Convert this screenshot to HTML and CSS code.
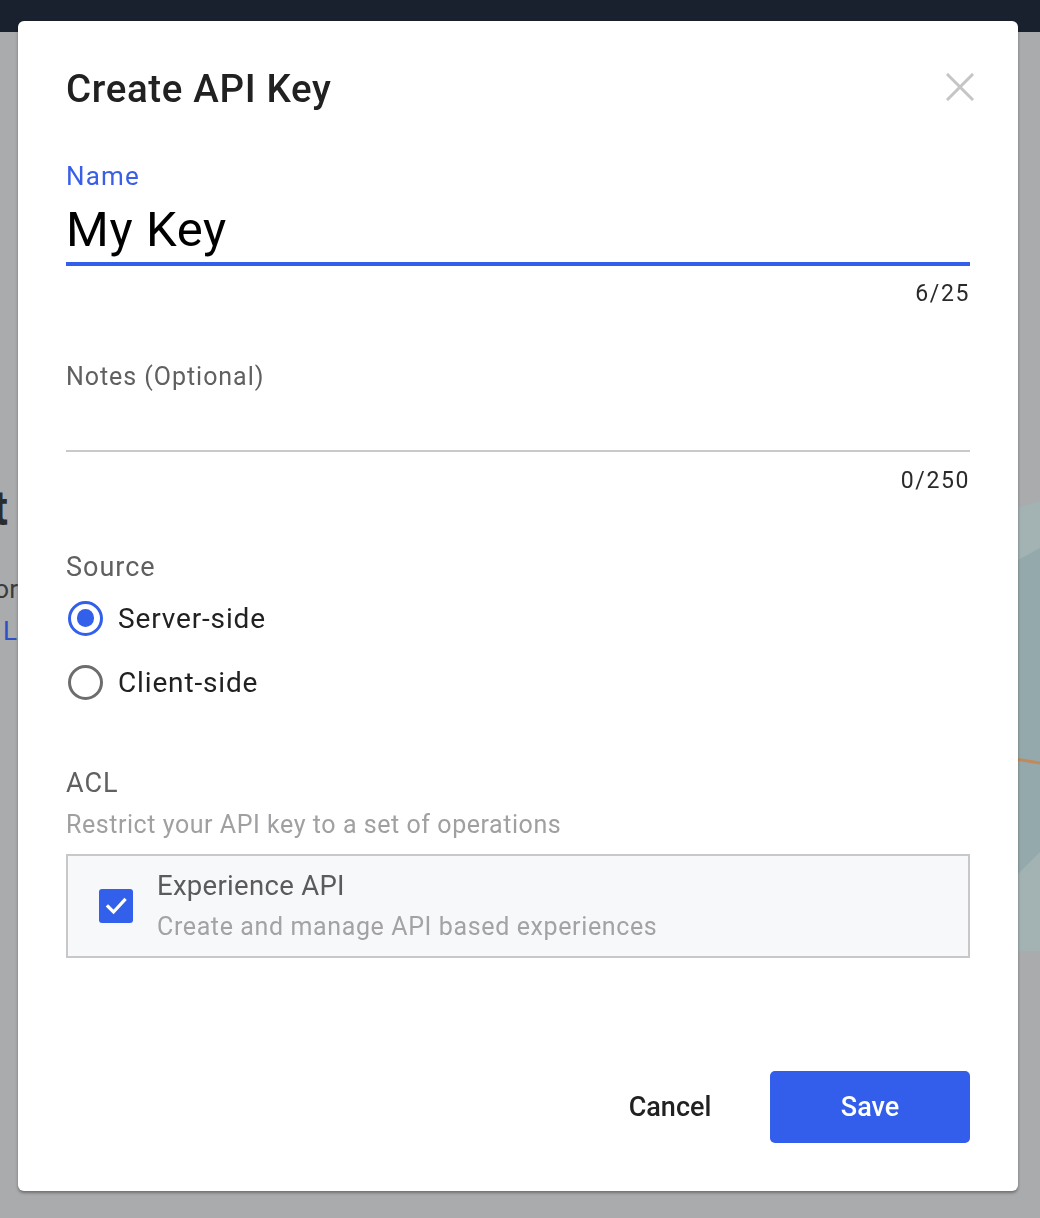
FILE: index.html
```html
<!DOCTYPE html>
<html lang="en">
<head>
<meta charset="utf-8">
<title>Create API Key</title>
<link rel="stylesheet" href="styles.css">
</head>
<body>
  <div class="app">
    <header class="topbar"></header>
    <main class="page">
      <section class="hero">
        <h1 class="hero-title">Your first project</h1>
        <p class="hero-text">Call it from your server or</p>
        <a class="hero-link">Learn more</a>
      </section>
      <div class="illustration">
        <svg width="60" height="470" viewBox="0 0 60 470">
          <path d="M0 22 L60 4 L60 454 L0 456 Z" fill="#a3b2b3"/>
          <path d="M0 84 L60 51 L60 355 L0 415 Z" fill="#94a9ab"/>
          <path d="M0 258 Q30 261 60 266" stroke="#c08a5c" stroke-width="3" fill="none"/>
        </svg>
      </div>
    </main>
  </div>

  <div class="overlay">
    <div class="modal">
      <div class="modal-header">
        <h2 class="modal-title">Create API Key</h2>
        <button class="close" aria-label="Close">
          <svg width="28" height="28" viewBox="0 0 28 28">
            <path d="M2 2 L26 26 M26 2 L2 26" stroke="#c5c5c7" stroke-width="3" stroke-linecap="square"/>
          </svg>
        </button>
      </div>

      <div class="field field-name">
        <div class="label label-active">Name</div>
        <div class="input-value">My Key</div>
      </div>
      <div class="counter counter-name">6/25</div>

      <div class="field field-notes">
        <div class="label">Notes (Optional)</div>
        <div class="input-empty"></div>
      </div>
      <div class="counter counter-notes">0/250</div>

      <div class="section-label source-label">Source</div>
      <div class="radio-group">
        <div class="radio-row">
          <span class="radio radio-on"><span class="radio-dot"></span></span>
          <span class="radio-text">Server-side</span>
        </div>
        <div class="radio-row">
          <span class="radio radio-off"></span>
          <span class="radio-text">Client-side</span>
        </div>
      </div>

      <div class="section-label acl-label">ACL</div>
      <div class="hint">Restrict your API key to a set of operations</div>

      <div class="acl-box">
        <span class="checkbox">
          <svg width="34" height="34" viewBox="0 0 34 34">
            <path d="M9 17.5 L14.5 23 L25.5 11" stroke="#fff" stroke-width="3.2" fill="none" stroke-linecap="square"/>
          </svg>
        </span>
        <div class="acl-text">
          <div class="acl-title">Experience API</div>
          <div class="acl-sub">Create and manage API based experiences</div>
        </div>
      </div>

      <div class="modal-footer">
        <button class="btn btn-cancel">Cancel</button>
        <button class="btn btn-save">Save</button>
      </div>
    </div>
  </div>
</body>
</html>
```
FILE: styles.css
```css
* { box-sizing: border-box; }

body {
  margin: 0;
  width: 1040px;
  height: 1218px;
  overflow: hidden;
  background: #aaabad;
  font-family: Roboto, "Noto Sans", "Liberation Sans", sans-serif;
}

.topbar {
  height: 32px;
  background: #19212f;
}

.page {
  display: flex;
  padding-top: 449px;
}

.hero {
  display: flex;
  flex-direction: column;
  width: 20px;
}

.hero-title {
  width: 400px;
  margin: 0 0 0 -392px;
  text-align: right;
  font-size: 48px;
  line-height: 56px;
  font-weight: 700;
  color: #2b2c2e;
  white-space: nowrap;
}

.hero-text {
  width: 400px;
  margin: 36px 0 0 -382px;
  text-align: right;
  font-size: 26px;
  line-height: 32px;
  color: #3a3b3d;
  white-space: nowrap;
}

.hero-link {
  margin: 10px 0 0 3px;
  font-size: 26px;
  line-height: 32px;
  color: #2f4fc4;
  white-space: nowrap;
}

.illustration {
  margin-left: auto;
  width: 60px;
  margin-top: 16px;
}

.illustration svg { display: block; }

.overlay {
  position: fixed;
  inset: 0;
  padding: 21px 0 0 18px;
}

.modal {
  width: 1000px;
  height: 1170px;
  background: #fff;
  border-radius: 6px;
  padding: 44px 48px 48px;
  display: flex;
  flex-direction: column;
  box-shadow: 0 2px 3px rgba(0, 0, 0, 0.35);
}

.modal-header {
  display: flex;
  justify-content: space-between;
  align-items: center;
  height: 48px;
}

.modal-title {
  margin: 0;
  font-size: 38.5px;
  letter-spacing: 0.65px;
  line-height: 48px;
  font-weight: 500;
  color: #212121;
}

.close {
  border: 0;
  background: none;
  padding: 0;
  width: 28px;
  height: 28px;
  margin: 0 -4px 4px 0;
}

.close svg { display: block; }

.field-name { margin-top: 48px; }

.label {
  font-size: 25px;
  letter-spacing: 0.95px;
  line-height: 30px;
  color: #606060;
}

.label-active {
  font-size: 26px;
  letter-spacing: 1.2px;
  color: #3a5fe6;
}

.input-value {
  margin-top: 11px;
  font-size: 49px;
  letter-spacing: 0.6px;
  line-height: 56px;
  color: #000;
  padding-bottom: 4px;
  border-bottom: 4px solid #3360ea;
}

.counter {
  text-align: right;
  font-size: 23px;
  letter-spacing: 1.6px;
  line-height: 26px;
  color: #2a2a2a;
}

.counter-name { margin-top: 15px; }

.field-notes { margin-top: 55px; }

.input-empty {
  height: 60px;
  border-bottom: 2px solid #c9c9cb;
}

.counter-notes { margin-top: 16px; }

.section-label {
  font-size: 27px;
  letter-spacing: 1px;
  line-height: 30px;
  color: #606060;
}

.source-label { margin-top: 58px; }

.radio-group {
  margin-top: 14px;
  display: flex;
  flex-direction: column;
  gap: 20px;
}

.radio-row {
  display: flex;
  align-items: center;
  height: 44px;
}

.radio {
  width: 35px;
  height: 35px;
  margin-left: 2px;
  border-radius: 50%;
  border: 3.5px solid #6d6d6d;
  display: flex;
  align-items: center;
  justify-content: center;
}

.radio-on { border-color: #3360ea; }

.radio-dot {
  width: 17.5px;
  height: 17.5px;
  border-radius: 50%;
  background: #3360ea;
}

.radio-text {
  margin-left: 15px;
  font-size: 28px;
  letter-spacing: 0.85px;
  color: #212121;
}

.acl-label { margin-top: 64px; }

.hint {
  margin-top: 12px;
  font-size: 25px;
  letter-spacing: 0.55px;
  line-height: 30px;
  color: #a0a0a2;
}

.acl-box {
  margin-top: 14px;
  height: 104px;
  border: 2px solid #c8c8ca;
  background: #f7f8fa;
  display: flex;
  align-items: center;
  padding-left: 31px;
}

.checkbox {
  width: 34px;
  height: 34px;
  border-radius: 3px;
  background: #3360ea;
  flex: none;
}

.checkbox svg { display: block; }

.acl-text { margin-left: 24px; }

.acl-title {
  font-size: 27.5px;
  letter-spacing: 0.3px;
  line-height: 34px;
  color: #5b5b5d;
}

.acl-sub {
  margin-top: 7px;
  font-size: 25px;
  letter-spacing: 0.62px;
  line-height: 34px;
  color: #a3a3a5;
}

.modal-footer {
  margin-top: auto;
  display: flex;
  justify-content: flex-end;
  align-items: center;
}

.btn {
  border: 0;
  font-family: inherit;
  font-size: 27px;
  font-weight: 500;
  height: 72px;
  padding: 0;
  cursor: pointer;
}

.btn-cancel {
  width: 140px;
  margin-right: 30px;
  background: none;
  color: #212121;
}

.btn-save {
  width: 200px;
  border-radius: 5px;
  background: #335deb;
  color: #fff;
}
```
